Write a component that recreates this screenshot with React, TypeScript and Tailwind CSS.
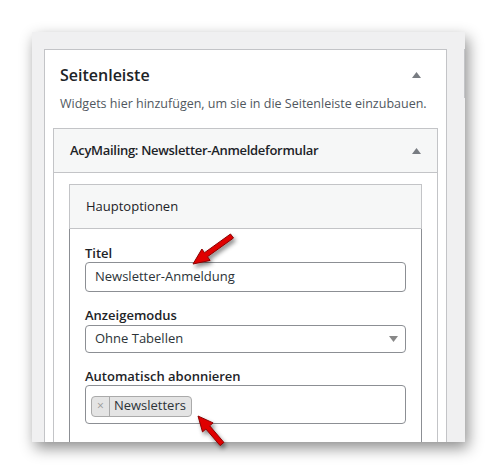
import React from "react";

const font = { fontFamily: '"Open Sans", "Noto Sans", sans-serif' };

function Tri() {
  return (
    <svg width="9" height="6" viewBox="0 0 9 6" className="block">
      <path d="M4.5 0 L9 6 L0 6 Z" fill="#787c82" />
    </svg>
  );
}

function Arrows() {
  return (
    <svg
      width="498"
      height="474"
      viewBox="0 0 498 474"
      className="absolute left-0 top-0 pointer-events-none"
    >
      <defs>
        <filter id="sh" x="-50%" y="-50%" width="200%" height="200%">
          <feDropShadow dx="2" dy="3" stdDeviation="2" floodColor="#000" floodOpacity="0.45" />
        </filter>
      </defs>
      <g filter="url(#sh)">
        <path
          d="M230.5 234 L204.5 252.7 L201.9 249 L193 264 L210.1 260.4 L207.5 256.7 L233.5 238 Z"
          fill="#e00000"
          stroke="#8a0000"
          strokeWidth="1"
          strokeLinejoin="round"
        />
        <path
          d="M223.9 442.4 L209.7 425.8 L213.1 422.9 L198 416 L202.5 431.9 L205.9 429 L220.1 445.6 Z"
          fill="#e00000"
          stroke="#8a0000"
          strokeWidth="1"
          strokeLinejoin="round"
        />
      </g>
    </svg>
  );
}

export default function App() {
  return (
    <div className="relative w-[498px] h-[474px] bg-white overflow-hidden" style={font}>
      <div className="pl-[32px] pt-[32px]">
        <div className="w-[433px] h-[410px] bg-[#f0f0f1] overflow-hidden flex items-start pl-[12px] pt-[17px] shadow-[3px_6px_14px_rgba(0,0,0,0.45)]">
          <div className="w-[403px] shrink-0 bg-white border border-[#c3c4c7]">
            <div className="flex items-center justify-between pl-[15px] pr-[25px] pt-[14px] h-[22px] box-content">
              <div className="text-[16px] font-semibold text-[#1d2327] leading-[22px]">Seitenleiste</div>
              <Tri />
            </div>
            <div className="pl-[15px] mt-[9px] text-[12.5px] leading-[18px] text-[#50575e]">
              Widgets hier hinzufügen, um sie in die Seitenleiste einzubauen.
            </div>
            <div className="mx-[8px] mt-[15px] border border-[#c3c4c7]">
              <div className="h-[44px] bg-[#f6f7f7] border-b border-[#c3c4c7] flex items-center justify-between pl-[16px] pr-[16px]">
                <div className="text-[13px] font-semibold tracking-[-0.3px] text-[#1d2327]">AcyMailing: Newsletter-Anmeldeformular</div>
                <Tri />
              </div>
              <div className="bg-white px-[15px] pt-[11px] pb-[40px]">
                <div className="border-x border-t border-[#c3c4c7]">
                  <div className="h-[44px] bg-[#f6f7f7] border-b border-[#c3c4c7] flex items-center pl-[16px] text-[13px] text-[#1d2327]">
                    Hauptoptionen
                  </div>
                </div>
                <div className="border-x border-[#8c8f94] px-[15px] pt-[15px] pb-[40px]">
                  <div className="text-[13px] font-semibold leading-[18px] text-[#1d2327]">Titel</div>
                  <div className="h-[30px] border border-[#8c8f94] rounded-[4px] flex items-center pl-[9px] text-[13px] text-[#2c3338]">
                    Newsletter-Anmeldung
                  </div>
                  <div className="mt-[14px] text-[13px] font-semibold leading-[18px] text-[#1d2327]">Anzeigemodus</div>
                  <div className="mt-[1px] h-[28px] border border-[#8c8f94] rounded-[4px] flex items-center justify-between pl-[9px] pr-[7px] text-[13px] text-[#2c3338]">
                    <span>Ohne Tabellen</span>
                    <svg width="9" height="6" viewBox="0 0 9 6" className="block">
                      <path d="M0 0 L9 0 L4.5 6 Z" fill="#888" />
                    </svg>
                  </div>
                  <div className="mt-[14px] text-[13px] font-semibold leading-[18px] text-[#1d2327]">Automatisch abonnieren</div>
                  <div className="h-[39px] border border-[#8c8f94] rounded-[4px] pl-[5px] pt-[6px]">
                    <div className="inline-flex h-[21px] items-stretch bg-[#e4e4e4] border border-[#aaaaaa] rounded-[4px] text-[13px] text-[#2c3338]">
                      <span className="flex items-center px-[5px] border-r border-[#aaaaaa] text-[#999] text-[12px]">×</span>
                      <span className="flex items-center pl-[4px] pr-[5px]">Newsletters</span>
                    </div>
                  </div>
                </div>
              </div>
            </div>
          </div>
          <div className="ml-[17px] w-[12px] h-[49px] shrink-0 bg-[#f6f7f7] border border-[#c3c4c7]" />
        </div>
      </div>
      <Arrows />
    </div>
  );
}
